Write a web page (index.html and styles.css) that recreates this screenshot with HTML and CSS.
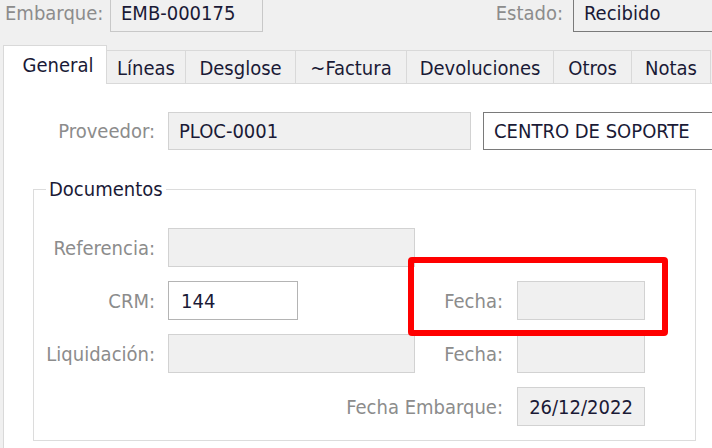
FILE: index.html
```html
<!DOCTYPE html>
<html lang="es">
<head>
    <meta charset="UTF-8">
    <meta name="viewport" content="width=device-width, initial-scale=1.0">
    <title>Embarque</title>
    <link rel="stylesheet" href="styles.css">
</head>
<body>

    <div class="header">
        <div class="hfield embarque">
            <span class="lbl">Embarque:</span>
            <span class="box ro">EMB-000175</span>
        </div>
        <div class="hfield estado">
            <span class="lbl">Estado:</span>
            <span class="box dark">Recibido</span>
        </div>
    </div>

    <div class="tabs">
        <div class="tab active">General</div>
        <div class="tab w-lineas">Líneas</div>
        <div class="tab w-desglose">Desglose</div>
        <div class="tab w-factura">~Factura</div>
        <div class="tab w-devol">Devoluciones</div>
        <div class="tab w-otros">Otros</div>
        <div class="tab w-notas">Notas</div>
    </div>

    <div class="panel">
        <div class="prov-row">
            <span class="lbl prov-lbl">Proveedor:</span>
            <span class="box ro prov-code">PLOC-0001</span>
            <span class="box dark prov-name">CENTRO DE SOPORTE</span>
        </div>

        <fieldset class="group">
            <legend>Documentos</legend>
            <div class="grid">
                <span class="lbl">Referencia:</span>
                <span class="box ro"></span>
                <span></span>
                <span></span>

                <span class="lbl">CRM:</span>
                <span class="box white short">144</span>
                <span class="lbl">Fecha:</span>
                <span class="box ro"></span>

                <span class="lbl">Liquidación:</span>
                <span class="box ro"></span>
                <span class="lbl">Fecha:</span>
                <span class="box ro"></span>

                <span class="lbl span3">Fecha Embarque:</span>
                <span class="box ro center">26/12/2022</span>
            </div>
            <div class="mark"></div>
        </fieldset>
    </div>

</body>
</html>
```

FILE: styles.css
```css
body {
    margin: 0;
    width: 712px;
    height: 448px;
    overflow: hidden;
    background-color: #f0f0f0;
    font-family: 'DejaVu Sans Condensed', 'DejaVu Sans', sans-serif;
    font-stretch: condensed;
    font-size: 20px;
    color: #1a1a36;
}

.lbl {
    color: #8c8c8c;
    text-align: right;
    white-space: nowrap;
    flex-shrink: 0;
}

.box {
    box-sizing: border-box;
    display: flex;
    align-items: center;
    height: 38px;
    padding: 0 10px;
    border: 1px solid #d2d2d2;
    background-color: #f0f0f0;
    white-space: nowrap;
    overflow: hidden;
    flex-shrink: 0;
}

.box.white {
    background-color: #fff;
    border-color: #b4b4b4;
}

.box.dark {
    background-color: #fff;
    border-color: #7a7a7a;
}

.box.center {
    justify-content: center;
}

/* cabecera */
.header {
    display: flex;
    height: 38px;
    margin-top: -6px;
}

.hfield {
    display: flex;
    align-items: center;
    flex-shrink: 0;
}

.hfield .lbl {
    text-align: left;
}

.embarque {
    padding-left: 5px;
}

.embarque .lbl {
    width: 105px;
}

.embarque .box {
    width: 153px;
    border-color: #c8c8c8;
}

.estado {
    margin-left: 231px;
}

.estado .lbl {
    width: 69px;
    text-align: right;
    margin-right: 10px;
}

.estado .box {
    width: 160px;
    background-color: #f0f0f0;
}

/* pestañas */
.tabs {
    display: flex;
    align-items: flex-end;
    height: 39px;
    margin-top: 13px;
    padding-left: 4px;
    position: relative;
    z-index: 1;
}

.tab {
    box-sizing: border-box;
    flex-shrink: 0;
    height: 34px;
    margin-left: -1px;
    border: 1px solid #d9d9d9;
    border-bottom: none;
    display: flex;
    align-items: center;
    justify-content: center;
    padding-top: 1px;
}

.tab.active {
    width: 104px;
    height: 39px;
    background-color: #fff;
    padding-top: 0;
    padding-left: 6px;
}

.w-lineas { width: 80px; }
.w-desglose { width: 111px; }
.w-factura { width: 112px; }
.w-devol { width: 148px; }
.w-otros { width: 79px; }
.w-notas { width: 80px; }

/* panel */
.panel {
    margin-left: 3px;
    margin-top: -1px;
    height: 370px;
    background-color: #fff;
    border-left: 1px solid #d9d9d9;
    border-top: 1px solid #d9d9d9;
}

.prov-row {
    display: flex;
    align-items: center;
    padding-top: 28px;
}

.prov-lbl {
    width: 151px;
    margin-right: 13px;
}

.prov-code {
    width: 303px;
    margin-right: 12px;
}

.prov-name {
    width: 240px;
}

/* grupo documentos */
.group {
    position: relative;
    box-sizing: border-box;
    width: 663px;
    height: 264px;
    margin: 27px 0 0 29px;
    padding: 0;
    border: 1px solid #dcdcdc;
}

.group legend {
    margin-left: 12px;
    padding: 0 3px;
    line-height: 24px;
}

.grid {
    display: grid;
    grid-template-columns: 134px 247px 102px 128px;
    grid-auto-rows: 39px;
    row-gap: 14px;
    align-items: center;
    margin-top: 27px;
}

.grid .lbl {
    padding-right: 13px;
}

.grid .box {
    height: 39px;
}

.grid .short {
    width: 130px;
    padding-left: 12px;
}

.grid .span3 {
    grid-column: 1 / 4;
    padding-right: 14px;
}

.grid .lbl:nth-child(4n+3) {
    padding-right: 14px;
}

.mark {
    position: absolute;
    left: 374px;
    top: 56px;
    width: 260px;
    height: 79px;
    box-sizing: border-box;
    border: 6px solid #ff0000;
    border-radius: 4px;
}
```
